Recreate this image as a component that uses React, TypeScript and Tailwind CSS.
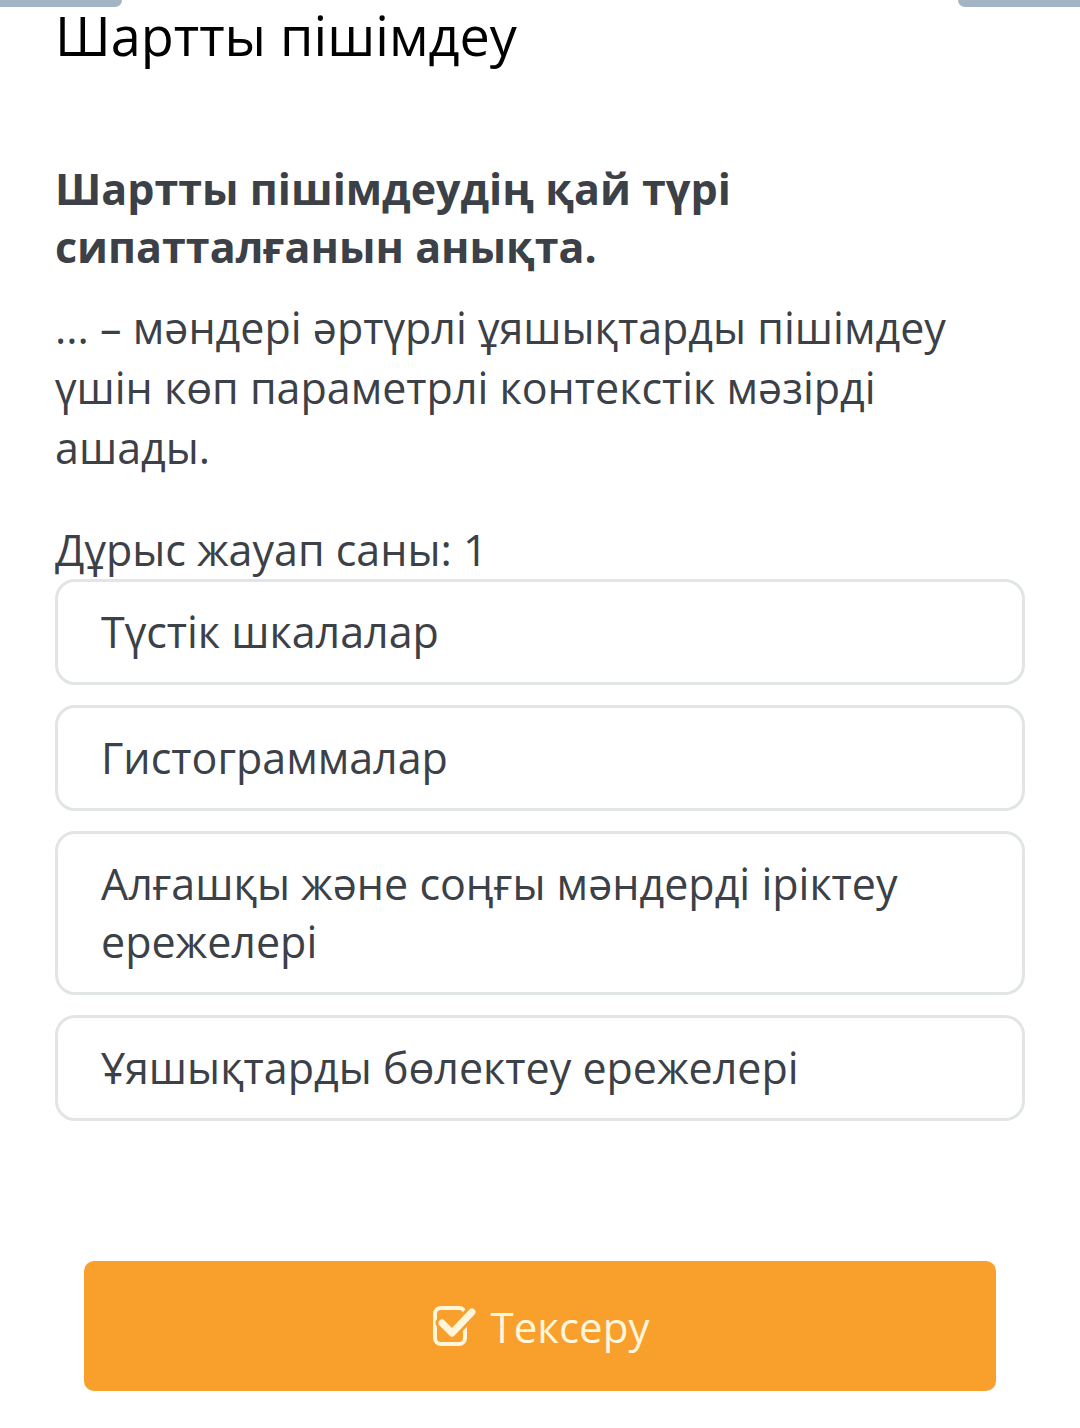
import { useState } from 'react'

const options = [
  'Түстік шкалалар',
  'Гистограммалар',
  'Алғашқы және соңғы мәндерді іріктеу ережелері',
  'Ұяшықтарды бөлектеу ережелері',
]

function CheckIcon() {
  return (
    <svg width="46" height="44" viewBox="0 0 46 44" fill="none" className="shrink-0">
      <rect x="4" y="4" width="30" height="36" rx="6" stroke="#fff6dc" strokeWidth="4" />
      <path d="M11 19 L21 29 L41 8" stroke="#f99f2c" strokeWidth="13" strokeLinecap="round" strokeLinejoin="round" />
      <path d="M11 19 L21 29 L41 8" stroke="#fff6dc" strokeWidth="7" strokeLinecap="round" strokeLinejoin="round" />
    </svg>
  )
}

export default function App() {
  const [selected, setSelected] = useState<number | null>(null)

  return (
    <div className="min-h-[1428px] bg-white font-['Open_Sans',sans-serif] text-[#3c4047]">
      {/* top tabs */}
      <div className="flex justify-between h-[7px]">
        <div className="w-[122px] bg-[#a3b5c5] rounded-br-[10px]" />
        <div className="w-[122px] bg-[#a3b5c5] rounded-bl-[10px]" />
      </div>

      <div className="px-[55px]">
        <h1 className="text-[54px] leading-[56px] text-black">Шартты пішімдеу</h1>

        <h2 className="mt-[97px] text-[43px] leading-[58px] font-bold">
          Шартты пішімдеудің қай түрі сипатталғанын анықта.
        </h2>

        <p className="mt-[22px] text-[43px] leading-[60px]">
          ... – мәндері әртүрлі ұяшықтарды пішімдеу үшін көп параметрлі контекстік мәзірді ашады.
        </p>

        <p className="mt-[42px] text-[43px] leading-[60px]">Дұрыс жауап саны: 1</p>

        <div className="flex flex-col gap-[20px] mt-[-1px]">
          {options.map((o, i) => (
            <button
              key={o}
              onClick={() => setSelected(i)}
              className={
                'text-left rounded-[20px] border-[3px] pl-[43px] pr-[40px] py-[21px] text-[43px] leading-[58px] ' +
                (selected === i ? 'border-[#f99f2c]' : 'border-[#e1e5e6]')
              }
            >
              {o}
            </button>
          ))}
        </div>
      </div>

      <div className="px-[84px] mt-[140px]">
        <button className="w-full h-[130px] rounded-[10px] bg-[#f99f2c] flex items-center justify-center gap-[14px] text-[#fff6dc] text-[42px]">
          <CheckIcon />
          <span>Тексеру</span>
        </button>
      </div>
    </div>
  )
}
